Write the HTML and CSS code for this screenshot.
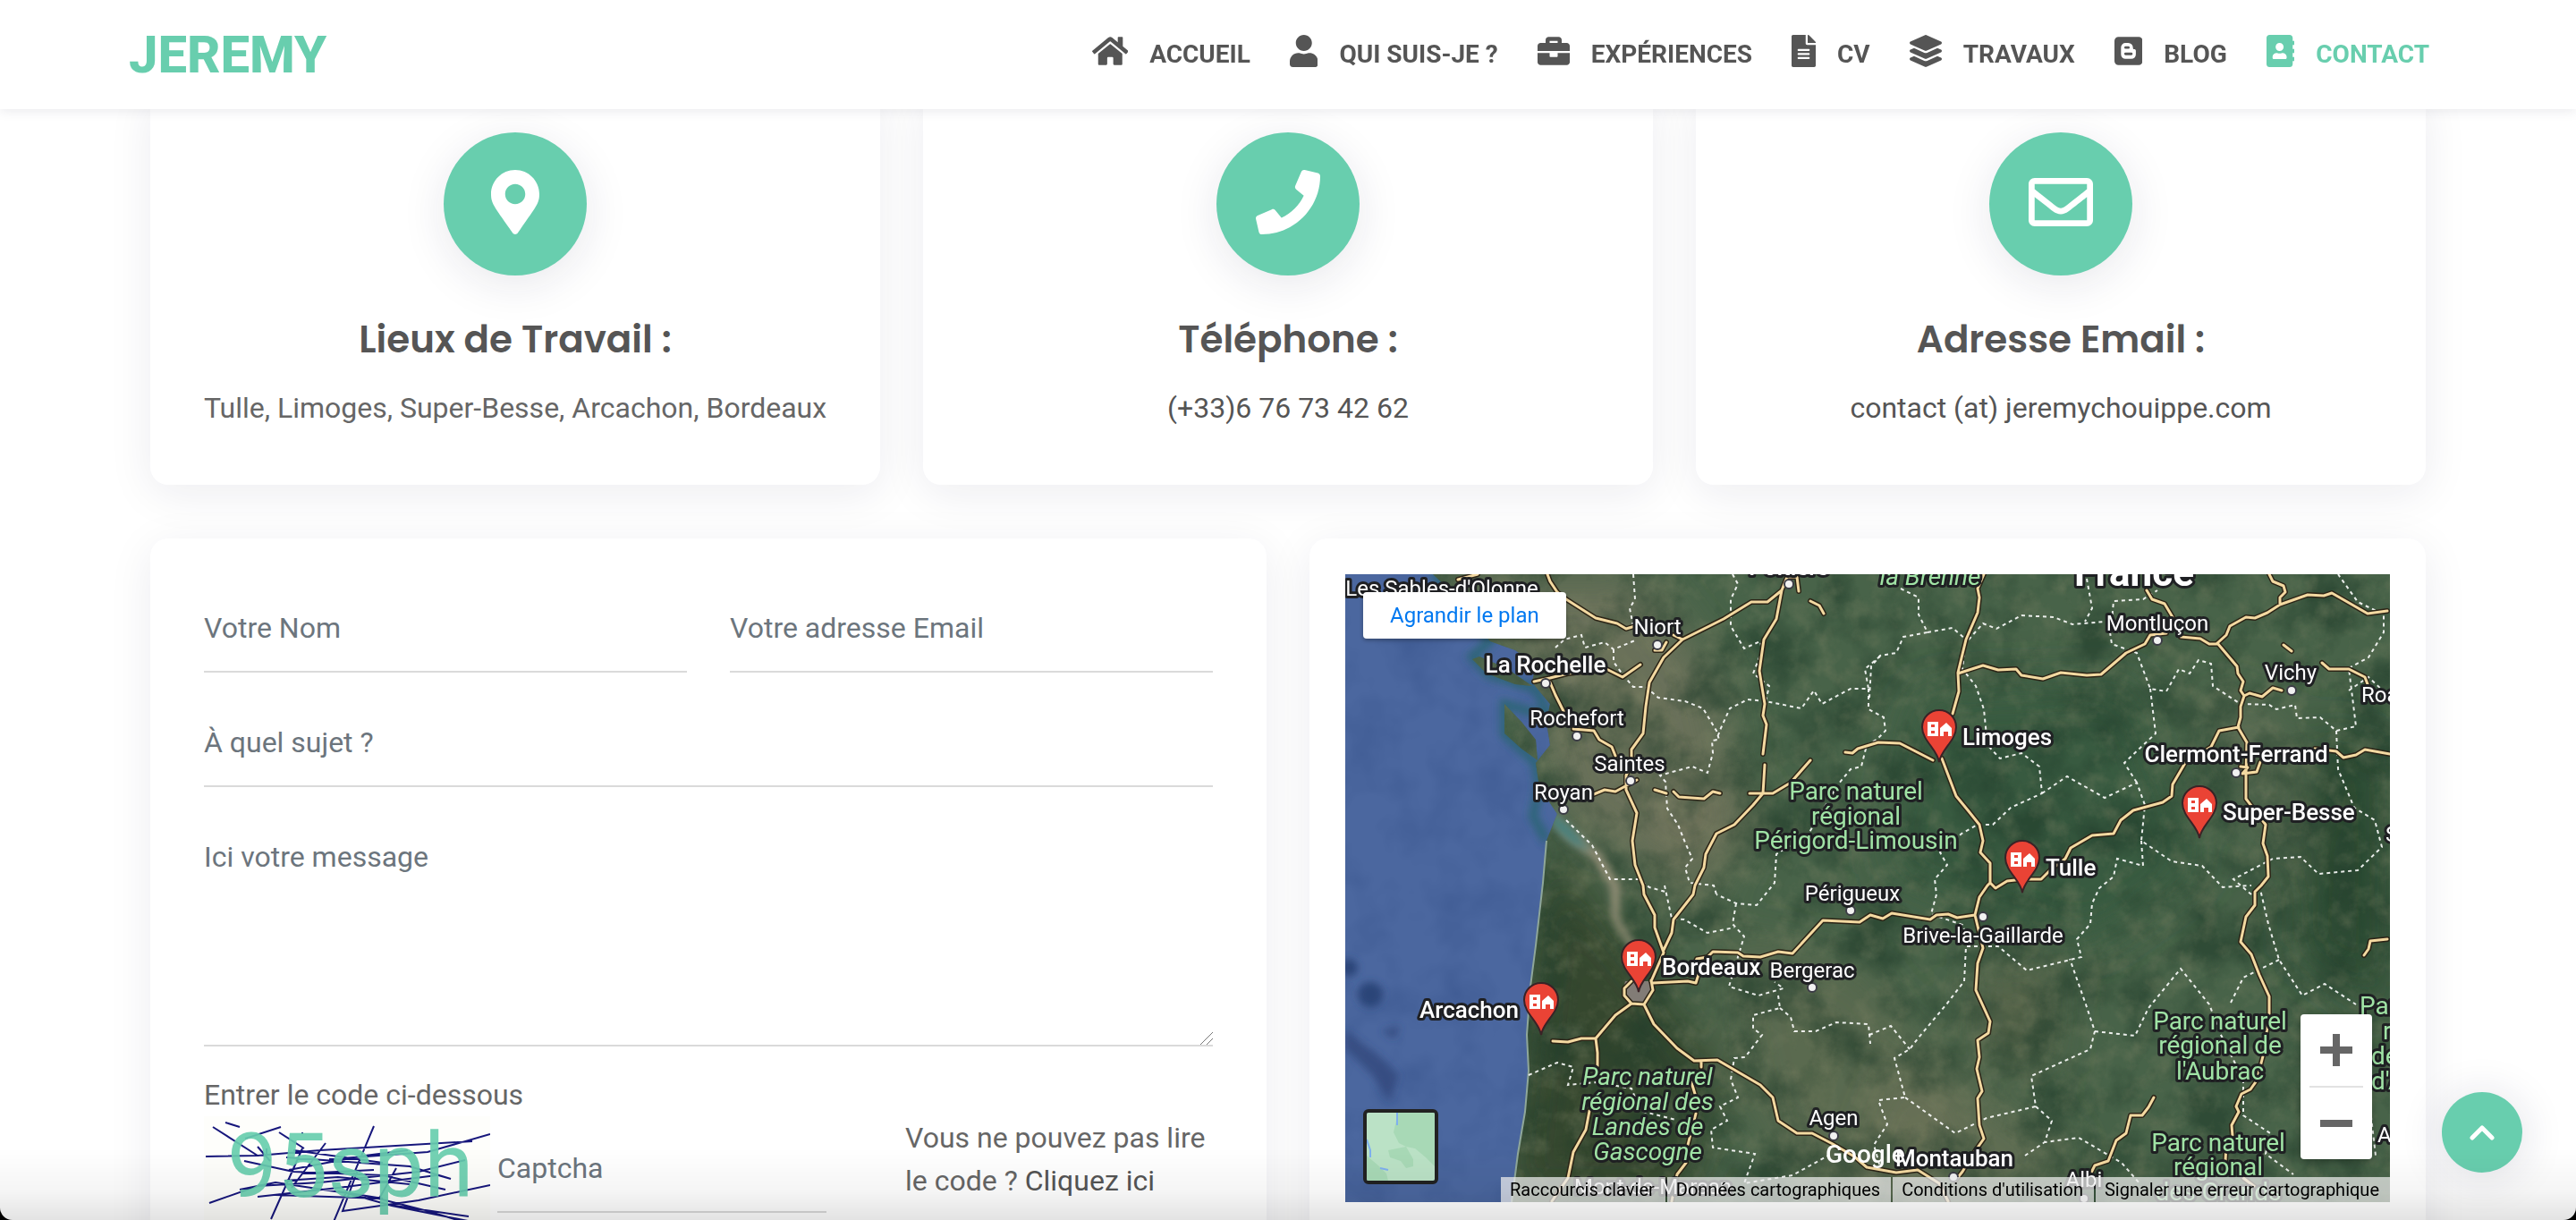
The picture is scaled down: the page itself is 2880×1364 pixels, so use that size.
FILE: index.html
```html
<!DOCTYPE html>
<html lang="fr">
<head>
<meta charset="utf-8">
<meta name="viewport" content="width=device-width, initial-scale=1">
<title>Jeremy - Contact</title>
<link rel="stylesheet" href="styles.css">
</head>
<body>
<header class="header">
  <a class="logo" href="#">JEREMY</a>
  <nav class="nav">
    <a href="#"><svg class="icon" viewBox="0 0 576 512"><path d="M280.37 148.26L96 300.11V464a16 16 0 0 0 16 16l112.06-.29a16 16 0 0 0 15.92-16V368a16 16 0 0 1 16-16h64a16 16 0 0 1 16 16v95.64a16 16 0 0 0 16 16.05L464 480a16 16 0 0 0 16-16V300L295.67 148.26a12.19 12.19 0 0 0-15.3 0zM571.6 251.47L488 182.56V44.05a12 12 0 0 0-12-12h-56a12 12 0 0 0-12 12v72.61L318.47 43a48 48 0 0 0-61 0L4.34 251.47a12 12 0 0 0-1.6 16.9l25.5 31A12 12 0 0 0 45.15 301l235.22-193.74a12.19 12.19 0 0 1 15.3 0L530.9 301a12 12 0 0 0 16.9-1.6l25.5-31a12 12 0 0 0-1.7-16.93z"/></svg>ACCUEIL</a>
    <a href="#"><svg class="icon" viewBox="0 0 448 512"><path d="M224 256c70.7 0 128-57.3 128-128S294.7 0 224 0 96 57.3 96 128s57.3 128 128 128zm89.600 32h-16.700c-22.200 10.200-46.900 16-72.900 16s-50.600-5.800-72.900-16h-16.700C60.200 288 0 348.200 0 422.400V464c0 26.500 21.500 48 48 48h352c26.500 0 48-21.500 48-48v-41.600c0-74.200-60.200-134.400-134.400-134.400z"/></svg>QUI SUIS-JE ?</a>
    <a href="#"><svg class="icon" viewBox="0 0 512 512"><path d="M320 336c0 8.840-7.160 16-16 16h-96c-8.840 0-16-7.160-16-16v-48H0v144c0 25.600 22.400 48 48 48h416c25.600 0 48-22.400 48-48V288H320v48zm144-208h-80V80c0-25.600-22.400-48-48-48H176c-25.600 0-48 22.400-48 48v48H48c-25.600 0-48 22.400-48 48v80h512v-80c0-25.600-22.400-48-48-48zm-144 0H192V96h128v32z"/></svg>EXPÉRIENCES</a>
    <a href="#"><svg class="icon" viewBox="0 0 384 512"><path d="M224 136V0H24C10.700 0 0 10.700 0 24v464c0 13.300 10.700 24 24 24h336c13.300 0 24-10.700 24-24V160H248c-13.200 0-24-10.800-24-24zm64 236c0 6.600-5.400 12-12 12H108c-6.600 0-12-5.400-12-12v-8c0-6.600 5.400-12 12-12h168c6.600 0 12 5.400 12 12v8zm0-64c0 6.600-5.400 12-12 12H108c-6.600 0-12-5.400-12-12v-8c0-6.600 5.400-12 12-12h168c6.600 0 12 5.400 12 12v8zm0-72v8c0 6.600-5.400 12-12 12H108c-6.600 0-12-5.400-12-12v-8c0-6.600 5.400-12 12-12h168c6.600 0 12 5.400 12 12zm96-114.100v6.100H256V0h6.100c6.400 0 12.500 2.500 17 7l97.900 98c4.500 4.500 7 10.600 7 16.900z"/></svg>CV</a>
    <a href="#"><svg class="icon" viewBox="0 0 512 512"><path d="M12.410 148.020l232.940 105.670c6.800 3.090 14.490 3.090 21.290 0l232.940-105.670c16.550-7.510 16.550-32.520 0-40.030L266.650 2.310a25.607 25.607 0 0 0-21.290 0L12.410 107.980c-16.550 7.510-16.550 32.530 0 40.040zm487.180 88.280l-58.090-26.330-161.640 73.270c-7.560 3.430-15.590 5.170-23.860 5.170s-16.290-1.740-23.860-5.170L70.510 209.970l-58.100 26.330c-16.550 7.500-16.550 32.500 0 40l232.940 105.590c6.800 3.080 14.490 3.080 21.290 0L499.590 276.300c16.550-7.500 16.550-32.500 0-40zm0 127.800l-57.870-26.230-161.860 73.370c-7.560 3.430-15.590 5.170-23.860 5.170s-16.290-1.740-23.860-5.170L70.290 337.870 12.410 364.100c-16.550 7.500-16.550 32.500 0 40l232.940 105.590c6.800 3.080 14.490 3.080 21.290 0L499.590 404.100c16.550-7.500 16.550-32.500 0-40z"/></svg>TRAVAUX</a>
    <a href="#"><svg class="icon" viewBox="0 0 448 512"><path fill-rule="evenodd" d="M64 32h320a64 64 0 0 1 64 64v320a64 64 0 0 1-64 64H64a64 64 0 0 1-64-64V96a64 64 0 0 1 64-64zm112 96a72 72 0 0 0-72 72v110a72 72 0 0 0 72 72h92a72 72 0 0 0 72-72v-56c0-18-12-26-26-26-14 0-20-8-20-26a74 74 0 0 0-74-74zm0 54h46a20 20 0 0 1 0 40h-46a20 20 0 0 1 0-40zm0 100h92a21 21 0 0 1 0 42h-92a21 21 0 0 1 0-42z"/></svg>BLOG</a>
    <a class="active" href="#"><svg class="icon" viewBox="0 0 448 512"><path d="M436 160c6.600 0 12-5.400 12-12v-40c0-6.600-5.400-12-12-12h-20V48c0-26.500-21.500-48-48-48H48C21.500 0 0 21.500 0 48v416c0 26.500 21.500 48 48 48h320c26.500 0 48-21.500 48-48v-48h20c6.600 0 12-5.400 12-12v-40c0-6.600-5.400-12-12-12h-20v-64h20c6.600 0 12-5.400 12-12v-40c0-6.600-5.400-12-12-12h-20v-64h20zm-228-32c35.300 0 64 28.700 64 64s-28.700 64-64 64-64-28.700-64-64 28.700-64 64-64zm112 236.800c0 10.600-10 19.200-22.400 19.200H118.400C106 384 96 375.400 96 364.800v-19.200c0-31.800 30.100-57.600 67.200-57.600h5c12.300 5.100 25.700 8 39.800 8s27.600-2.900 39.800-8h5c37.100 0 67.200 25.800 67.200 57.600v19.200z"/></svg>CONTACT</a>
  </nav>
</header>

<main class="page">
  <section class="infos">
    <article class="card info">
      <span class="badge"><svg viewBox="0 0 384 512"><path d="M172.268 501.670C26.970 291.031 0 269.413 0 192 0 85.961 85.961 0 192 0s192 85.961 192 192c0 77.413-26.970 99.031-172.268 309.670-9.535 13.774-29.930 13.773-39.464 0zM192 272c44.183 0 80-35.817 80-80s-35.817-80-80-80-80 35.817-80 80 35.817 80 80 80z"/></svg></span>
      <h2>Lieux de Travail :</h2>
      <p>Tulle, Limoges, Super-Besse, Arcachon, Bordeaux</p>
    </article>
    <article class="card info">
      <span class="badge"><svg viewBox="0 0 512 512"><path d="M493.400 24.600l-104-24c-11.300-2.600-22.900 3.300-27.500 13.900l-48 112c-4.200 9.800-1.400 21.300 6.900 28l60.600 49.600c-36 76.700-98.900 140.500-177.200 177.200l-49.600-60.600c-6.800-8.300-18.200-11.100-28-6.900l-112 48C3.900 366.500-2 378.100.600 389.400l24 104C27.100 504.200 36.700 512 48 512c256.100 0 464-207.500 464-464 0-11.200-7.700-20.900-18.600-23.400z"/></svg></span>
      <h2>Téléphone :</h2>
      <p><a href="#">(+33)6 76 73 42 62</a></p>
    </article>
    <article class="card info">
      <span class="badge"><svg viewBox="0 0 512 512"><path d="M464 64H48C21.490 64 0 85.490 0 112v288c0 26.510 21.490 48 48 48h416c26.510 0 48-21.490 48-48V112c0-26.510-21.490-48-48-48zm0 48v40.805c-22.422 18.259-58.168 46.651-134.587 106.490-16.841 13.247-50.201 45.072-73.413 44.701-23.208.375-56.579-31.459-73.413-44.701C106.180 199.465 70.425 171.067 48 152.805V112h416zM48 400V214.398c22.914 18.251 55.409 43.862 104.938 82.646 21.857 17.205 60.134 55.186 103.062 54.955 42.717.231 80.509-37.199 103.053-54.947 49.528-38.783 82.032-64.401 104.947-82.653V400H48z"/></svg></span>
      <h2>Adresse Email :</h2>
      <p><a href="#">contact (at) jeremychouippe.com</a></p>
    </article>
  </section>

  <section class="panels">
    <form class="card form">
      <div class="pair">
        <input type="text" placeholder="Votre Nom" aria-label="Votre Nom">
        <input type="email" placeholder="Votre adresse Email" aria-label="Votre adresse Email">
      </div>
      <input type="text" placeholder="À quel sujet ?" aria-label="À quel sujet ?">
      <textarea placeholder="Ici votre message" aria-label="Ici votre message"></textarea>
      <div class="code">
        <label for="captcha">Entrer le code ci-dessous</label>
        <div class="code-row">
          <svg class="captcha" viewBox="0 0 320 118" role="img" aria-label="Code">
            <g class="scribble">
              <path d="M10 12L60 44M24 7L40 12M46 25L86 12M84 18L112 36M110 18V20M2 45L60 44L130 38L300 28M320 20L250 40L140 48M45 50L100 62L200 66L270 82M6 97L60 78L130 74L240 62L292 49M75 115L110 36M190 11L145 118M136 30L98 80M92 46L230 56L276 70L262 66M95 60L180 44L228 38M60 90L150 80L260 66M40 82L80 74L160 86L210 100L300 118M320 77L240 94L155 106L172 60M200 98L296 112M195 92L250 106L290 118M215 58L196 92M80 88L200 92L150 84M60 34L74 50M100 38L200 52M70 36L70 42M90 72L150 68L230 76M110 64L190 60"/>
            </g>
            <text x="26" y="90">95sph</text>
          </svg>
          <input id="captcha" type="text" placeholder="Captcha">
          <p>Vous ne pouvez pas lire le code ? <a href="#">Cliquez ici</a></p>
        </div>
      </div>
    </form>

    <div class="card mapcard">
      <div class="map">
        <svg class="terrain" viewBox="0 0 1168 702" preserveAspectRatio="xMidYMid slice">
          <defs>
            <filter id="patches" x="0" y="0" width="100%" height="100%" color-interpolation-filters="sRGB"><feTurbulence type="fractalNoise" baseFrequency="0.016" numOctaves="6" seed="8"/><feColorMatrix values="0 0 0 0 0.13  0 0 0 0 0.24  0 0 0 0 0.17  2.6 0 0 0 -1.05"/></filter>
            <filter id="fields" x="0" y="0" width="100%" height="100%" color-interpolation-filters="sRGB"><feTurbulence type="fractalNoise" baseFrequency="0.04" numOctaves="5" seed="21"/><feColorMatrix values="0 0 0 0 0.5  0 0 0 0 0.52  0 0 0 0 0.40  0 2 0 0 -0.9"/></filter>
            <filter id="waves" x="0" y="0" width="100%" height="100%" color-interpolation-filters="sRGB"><feTurbulence type="fractalNoise" baseFrequency="0.02" numOctaves="3" seed="3"/><feColorMatrix values="0 0 0 0 0.22  0 0 0 0 0.33  0 0 0 0 0.55  0 0 1 0 -0.4"/></filter>
            <filter id="soft" x="-30%" y="-30%" width="160%" height="160%"><feGaussianBlur stdDeviation="26"/></filter>
            <filter id="shore" x="-30%" y="-30%" width="160%" height="160%"><feGaussianBlur stdDeviation="4"/></filter>
            <clipPath id="land"><path d="M98 0L130 30L150 61L162 75L190 85L213 101L209 121L229 145L225 165L229 191L213 211L217 238L237 268L225 298L221 345L213 415L207 461L203 515L205 555L201 601L193 648L186 702H1168V0ZM142 95L150 92L180 105L209 125L190 123L158 111ZM178 145L197 165L213 185L215 208L197 195L178 178Z"/></clipPath>
            <g id="pin"><path d="M0 0C-2-14-19-24-19-39A19 19 0 0 1 19-39C19-24 2-14 0 0Z" fill="#ea4335" stroke="#3a2226" stroke-width="2"/><path fill="#fff" fill-rule="evenodd" d="M-13-45H-1V-29H-13ZM-9-42V-39H-5V-42ZM-9-35V-32H-5V-35ZM1-38L8-44L14-38V-29H10V-34H5V-29H1Z"/></g>
            <path id="roads" d="M226 0L229 8L237 20L247 28L280 49L304 55L314 61L324 58M494 3L488 18L472 31H454L423 50L377 73L356 93L340 121L336 148L333 178L320 196L320 212L314 225V241L326 267L321 298L324 325L333 348L334 358L346 381V395L356 423L342 455M211 120L229 116L249 111L292 106L310 115L330 101M229 121L235 135L244 153M255 173L278 175L284 185L298 193L302 203M278 246L290 241L302 243L326 230M346 241L359 245M367 243L373 249L401 251L411 243L419 245M488 18L482 50L468 73L463 108L469 145L467 158L471 168L467 201M469 213L467 245L456 258L435 280L415 290L403 313L401 328L391 348L389 358L367 386L365 401L356 420M452 245L478 245L498 233L520 208M494 3L505 3L507 19M520 30L530 35L535 44M559 199L567 200L573 195L596 188L620 189L657 208M126 6L148 0M377 73L367 68M346 85H354L359 76M714 0L707 16L709 26L707 43L694 73L685 110L686 131L679 156M667 206L683 248L697 265L709 280L713 298L710 311L721 323V345L727 351L740 343L758 341L778 341L788 331L805 318L811 306L835 292L859 290L867 275L881 264L914 255L924 248L925 235L939 211L968 193L977 175L999 171M685 111L713 102L730 107L750 106L756 113L780 117L800 110L829 113L845 112L873 88L894 78L900 68L918 66M934 70L956 72L966 78H975M896 18L902 28L916 33L925 48M1033 0L1037 8L1049 13L1051 20L1045 26V34M975 77L985 68L989 58L1007 48L1017 49L1031 43L1045 34L1076 23L1094 24L1103 21L1143 44L1165 41M975 77L997 103L998 111L1004 120L1001 130L1005 136L1001 148V160L998 171L1008 188L1007 225V251L1029 280L1026 301L1031 315L1032 338L1024 348L1017 355V370L1007 383L1001 411L1013 425L1022 448L1033 472V491L1027 535L1019 566L1012 576L1002 581L996 595L999 601L991 616L992 628L985 638L984 656M1004 675L1017 685M1005 136L1011 133L1025 137L1037 127L1047 130M1092 99L1100 106H1122L1140 115L1143 123M1049 79L1058 86M1084 195L1108 198L1116 205L1130 202L1140 196L1168 201M1001 215L1009 216L1003 223L1019 221L1023 210M320 455L312 463V471L320 480L334 481L344 465L342 454M344 457L383 455L392 457L396 444M385 448L393 430L405 428L411 422L439 423L445 427L464 428L484 422L500 424L534 387L575 389L587 381L601 385L611 379L654 386L661 381L674 380L684 384L704 381L709 361L718 348L721 345M320 480L302 493L280 519L282 535V550M232 522L249 523L264 519H280M273 600L269 621L255 646L249 675L231 701M334 481L345 503L371 530L390 544L416 543L464 571L478 585L484 611L505 625H522L545 637L569 651L583 663L616 669L640 666L664 681L674 701M398 545V551M387 568L391 581M392 603L383 638M381 658L371 671L365 701M704 381L713 418L707 435L705 465L721 500L719 513L707 521L709 540L706 553L712 578L707 586L709 616L714 631L702 648L690 668L682 678M904 585L898 596L891 605H878L873 625L862 633L853 656L838 661L833 671M1165 408L1146 410L1144 419L1139 426"/>
          </defs>
          <rect width="1168" height="702" fill="#4b679f"/>
          <rect width="260" height="702" filter="url(#waves)"/>
          <g fill="#2c4478" filter="url(#shore)"><circle cx="28" cy="470" r="14"/><circle cx="4" cy="440" r="10"/><path d="M0 510L40 540L60 560L50 590L30 560L0 530ZM40 510L62 505L55 520Z" opacity=".7"/></g>
          <path d="M98 0L130 30L162 75L142 92L160 112L213 128L229 160L178 145L178 178L213 211L217 238L210 270L225 298" fill="none" stroke="#2d6578" stroke-width="10" filter="url(#shore)"/>
          <g clip-path="url(#land)">
            <rect width="1168" height="702" fill="#486349"/>
            <g filter="url(#soft)">
              <path d="M100 0L330 0L420 120L440 300L330 330L240 270L190 80Z" fill="#767560" opacity=".75"/>
              <path d="M380 200L470 260L380 400L340 330Z" fill="#73735c" opacity=".6"/>
              <path d="M225 300L330 430L420 560L380 702H180Z" fill="#34472f"/>
              <path d="M640 130L880 120L960 330L830 420L600 330Z" fill="#385a40"/>
              <path d="M420 400L580 440L700 600L640 700L500 690L440 560Z" fill="#6c7256" opacity=".5"/>
              <path d="M960 130L1040 160L1060 340L1010 260Z" fill="#6d735c" opacity=".65"/>
              <path d="M1090 160L1168 200V500L1060 420Z" fill="#2a4933"/>
              <path d="M620 540L820 640L760 702H560Z" fill="#77775d" opacity=".5"/>
              <path d="M700 440L800 430L790 560L700 540Z" fill="#60664d" opacity=".6"/>
            </g>
            <rect width="1168" height="702" filter="url(#patches)" opacity=".6"/>
            <rect width="1168" height="702" filter="url(#fields)" opacity=".4"/>
            <path d="M230 262L250 285L285 310L308 350L306 385L330 424L318 418L298 385L296 350L276 318L240 290Z" fill="#8f8c74" filter="url(#shore)"/>
            <path d="M225 262L250 280L275 310L255 302L235 285Z" fill="#49807c" filter="url(#shore)"/>
            <path d="M313 455L342 455L344 470L334 482L320 480L310 468Z" fill="#827c76"/>
          </g>
          <path class="coast" d="M225 298L221 345L213 415L207 461L203 515L205 555L201 601L193 648L186 702"/>
          <path class="border" d="M322 0L324 28L318 38L322 58M235 82L245 73L264 68L268 82L290 76L300 84L324 74M300 84V98L310 112L322 126L336 126L350 138L380 142L400 150L415 175L418 185L410 186L411 200L405 222L388 215L362 222L352 225L358 232L360 262L372 280L380 300L388 318L380 328L385 345L412 348L415 358M433 0L439 11L431 28V58L446 83L464 75L466 85L456 111L474 125L470 142L510 150L524 130L533 145L565 128L585 128L581 106L600 90M470 142L450 140L430 150L420 172L415 185M585 128V151L602 160L604 175L594 185L583 191L577 215L565 218L551 235L518 290L482 313L480 345L460 370L437 368L415 358M437 368L433 391L446 405L435 441L429 461L462 471L490 463L480 456M357 348L365 385L379 386L405 401L435 395M484 471L486 485L456 493V508L466 515L447 540L435 541L431 565L439 585L419 595L427 611L409 621L411 641L458 648L446 681L500 672L540 650M486 485L498 495L502 511H526L549 501L585 503L587 525M205 560L237 546L255 551L249 571L280 568L320 575L330 600L370 610M247 275L276 303L296 341H328L340 350L358 355"/>
          <path class="border" d="M621 16L641 26V45L651 65L624 70L616 88L598 91L588 103L586 138M651 65L679 60L694 73L690 106L705 125L714 151L718 191L732 206L756 200L776 215L779 245L744 261L724 280H707L689 290L665 311L673 325L659 341L661 358L655 380L690 392L700 416M779 245L807 226L849 250L885 233L894 258L890 298L924 321L958 326L981 350L1013 348M697 73L713 55L728 61L756 46L792 48L813 56L849 53M829 5L835 38L827 53M857 53L859 30L892 28L908 18M855 65L857 78L885 88L900 128L918 131L932 106L944 111L954 96L968 100L970 125L1001 145L1033 146L1041 151L1062 146L1064 161L1090 160L1108 175L1130 170L1122 105L1144 93L1161 65V45L1132 31L1110 0M900 128L906 178L871 211L885 233M1108 175L1110 218L1128 261L1151 275L1159 305L1132 331L1088 335L1068 316L1037 318L993 341L1013 358M890 298L892 326L863 318L859 338L843 351L835 368L833 391L818 408L823 428L762 443L730 416H694L692 455L672 481L641 518L631 531L614 541L626 585L596 588L606 615L591 638L600 670M586 515L610 505L631 531M626 585L682 625L717 608L772 595L767 561L833 531L838 511L828 481L810 430M838 511L883 516L898 485L934 441L966 481L979 515L1004 565V605L1034 625L1029 648L1060 671M772 595L790 611L782 635L820 630L868 658L888 681M760 650L782 635M1022 348L1032 391L1044 431L1070 471L1095 458L1130 481M1044 431L1004 451L989 481M1145 590L1152 650M1122 130L1144 115L1160 130"/>
          <use class="road-edge" href="#roads"/>
          <use class="road" href="#roads"/>
          <g class="dots">
            <circle cx="349" cy="79" r="5"/><circle cx="224" cy="122" r="5"/><circle cx="259" cy="181" r="5"/><circle cx="319" cy="231" r="5"/><circle cx="244" cy="263" r="5"/><circle cx="496" cy="11" r="5"/><circle cx="908" cy="74" r="5"/><circle cx="1058" cy="130" r="5"/><circle cx="996" cy="222" r="5"/><circle cx="565" cy="376" r="5"/><circle cx="522" cy="462" r="5"/><circle cx="546" cy="628" r="5"/><circle cx="713" cy="383" r="5"/><circle cx="680" cy="674" r="5"/><circle cx="826" cy="698" r="5"/>
          </g>
          <g class="place mid">
            <text x="349" y="67">Niort</text><text x="259" y="169">Rochefort</text><text x="318" y="220">Saintes</text><text x="244" y="252">Royan</text><text x="908" y="63">Montluçon</text><text x="1057" y="118">Vichy</text><text x="567" y="365">Périgueux</text><text x="522" y="451">Bergerac</text><text x="546" y="616">Agen</text><text x="713" y="412">Brive-la-Gaillarde</text><text x="826" y="685">Albi</text><text x="344" y="693">Mont-de-Marsan</text><text x="108" y="24">Les Sables-d'Olonne</text>
          </g>
          <g class="place"><text x="1136" y="143">Roanne</text><text x="1163" y="299">Saint</text><text x="1154" y="635">Alès</text></g>
          <g class="place major mid">
            <text x="224" y="110">La Rochelle</text><text x="996" y="210">Clermont-Ferrand</text><text x="681" y="662">Montauban</text><text x="496" y="1">Poitiers</text>
          </g>
          <text class="place country mid" x="882" y="13">France</text>
          <g class="place park mid">
            <text x="571" y="252">Parc naturel</text><text x="571" y="280">régional</text><text x="571" y="307">Périgord-Limousin</text>
            <text x="978" y="509">Parc naturel</text><text x="978" y="536">régional de</text><text x="978" y="565">l'Aubrac</text>
            <text x="976" y="645">Parc naturel</text><text x="976" y="672">régional</text><text x="976" y="700">des Grands</text>
          </g>
          <g class="place park italic mid">
            <text x="338" y="571">Parc naturel</text><text x="338" y="599">régional des</text><text x="338" y="627">Landes de</text><text x="338" y="655">Gascogne</text><text x="654" y="12">la Brenne</text>
          </g>
          <g class="place park"><text x="1134" y="492">Parc</text><text x="1160" y="520">rég</text><text x="1147" y="548">des</text><text x="1147" y="576">d'Ar</text></g>
          <g class="place major">
            <text x="690" y="191">Limoges</text><text x="981" y="275">Super-Besse</text><text x="783" y="337">Tulle</text><text x="354" y="448">Bordeaux</text><text x="83" y="496">Arcachon</text>
          </g>
          <use href="#pin" x="664" y="210"/><use href="#pin" x="955" y="295"/><use href="#pin" x="757" y="356"/><use href="#pin" x="328" y="467"/><use href="#pin" x="219" y="515"/>
          <text class="google" x="537" y="658">Google</text>
        </svg>
        <a class="enlarge" href="#">Agrandir le plan</a>
        <button class="layers" type="button" aria-label="Plan"><svg viewBox="0 0 76 76"><path fill="#bbe2c6" d="M0 0H76V76H0z"/><path fill="#a8d9b6" d="M35 0H76V60L66 50L54 40L44 38L36 34L30 22ZM24 42L44 38L52 52V60L44 62L38 54L26 50ZM0 48L14 60L22 68L24 76H0Z"/><path fill="none" stroke="#7fb0ef" stroke-width="2" d="M0 30L4 42V50M15 62L24 64M34 0V14"/></svg></button>
        <div class="zoom">
          <button type="button" aria-label="Zoom avant"><svg viewBox="0 0 36 36"><path d="M14 0h8v14h14v8H22v14h-8V22H0v-8h14z"/></svg></button>
          <button type="button" aria-label="Zoom arrière"><svg viewBox="0 0 36 36"><path d="M0 14h36v8H0z"/></svg></button>
        </div>
        <div class="legal">
          <button type="button">Raccourcis clavier</button><button type="button">Données cartographiques</button><a href="#">Conditions d'utilisation</a><a href="#">Signaler une erreur cartographique</a>
        </div>
      </div>
    </div>
  </section>
</main>

<a class="to-top" href="#" aria-label="Haut de page"><svg viewBox="0 0 28 18"><path d="M3 15L14 4L25 15"/></svg></a>
<div class="edge"></div>
</body>
</html>
```
FILE: styles.css
```css
* { box-sizing: border-box; }
html { height: 100%; overflow: hidden; }
body {
  margin: 0;
  height: 100vh;
  overflow: hidden;
  background: #fff;
  color: #666;
  font: 32px/48px Roboto, "Liberation Sans", sans-serif;
}
a { color: #555; text-decoration: none; }
button { border: 0; padding: 0; margin: 0; font: inherit; background: none; cursor: pointer; }

.header {
  position: fixed;
  inset: 0 0 auto;
  z-index: 10;
  display: flex;
  align-items: center;
  justify-content: space-between;
  height: 122px;
  padding: 0 164px 0 144px;
  background: #fff;
  box-shadow: 0 2px 12px rgba(40, 40, 70, .1);
}
.header .logo { color: #68ceae; font-size: 58px; font-weight: 800; }
.nav { display: flex; gap: 44px; }
.nav a {
  display: flex;
  align-items: center;
  gap: 24px;
  font-size: 28px;
  font-weight: 700;
}
.nav .active { color: #68ceae; }
.icon { height: 36px; margin-bottom: 8px; fill: currentColor; }

.page { padding: 100px 168px 48px; }
.card {
  min-width: 0;
  border-radius: 20px;
  background: #fff;
  box-shadow: 0 10px 50px rgba(30, 30, 70, .08);
}
.infos { display: grid; grid-template-columns: repeat(3, 1fr); gap: 48px; }
.info {
  display: flex;
  flex-direction: column;
  align-items: center;
  padding: 48px 24px 62px;
  text-align: center;
}
.badge {
  display: flex;
  justify-content: center;
  width: 160px;
  height: 160px;
  padding-top: 42px;
  border-radius: 50%;
  background: #68ceae;
  box-shadow: 0 10px 50px rgba(30, 30, 70, .1);
}
.badge svg { height: 72px; fill: #fff; }
.info h2 {
  margin: 42px 0 22px;
  color: #555;
  font: 600 42px/60px Poppins, Inter, sans-serif;
}
.info p { margin: 0; }

.panels { display: grid; grid-template-columns: 1fr 1fr; gap: 48px; margin-top: 60px; }
.form { display: flex; flex-direction: column; gap: 30px; padding: 52px 60px; }
.pair { display: grid; grid-template-columns: 1fr 1fr; gap: 48px; }
input, textarea {
  display: block;
  width: 100%;
  min-width: 0;
  height: 98px;
  margin: 0;
  padding: 24px 0;
  border: 0;
  border-bottom: 2px solid #dadada;
  border-radius: 0;
  background: none;
  color: #666;
  font: inherit;
}
textarea { height: 260px; resize: vertical; }
textarea::-webkit-scrollbar { width: 20px; }
textarea::-webkit-resizer {
  background: linear-gradient(135deg, transparent 52%, #777 52% 56%, transparent 56% 74%, #777 74% 78%, transparent 78%);
}
::placeholder { color: #6c757d; opacity: 1; }
.code label { display: block; }
.code-row { display: flex; align-items: center; gap: 8px; }
.code-row input { flex: 0 1 368px; }
.code-row p { align-self: flex-start; width: 344px; margin: 0 0 0 auto; }
.captcha { flex: none; width: 320px; height: 118px; background: #fefefb; }
.captcha text { font: 100px Roboto, sans-serif; fill: #68ceae; fill-opacity: .92; }
.scribble { fill: none; stroke: #17177c; stroke-width: 2; }

.mapcard { padding: 40px; }
.map { position: relative; aspect-ratio: 1168 / 702; overflow: hidden; }
.terrain { display: block; width: 100%; height: 100%; }
.coast { fill: none; stroke: #8fa79a; stroke-width: 2; }
.border { fill: none; stroke: #fff; stroke-width: 2; stroke-dasharray: 4 4; opacity: .9; }
.road-edge { fill: none; stroke: #2c2416; stroke-width: 6; stroke-linejoin: round; stroke-linecap: round; }
.road { fill: none; stroke: #f3d9a1; stroke-width: 3; stroke-linejoin: round; stroke-linecap: round; }
.dots circle { fill: #f1f1f1; stroke: #3c3c46; stroke-width: 2; }
.place {
  fill: #fff;
  stroke: #1f2023;
  stroke-width: 6px;
  stroke-linejoin: round;
  paint-order: stroke;
  font-size: 24px;
}
.mid { text-anchor: middle; }
.major { font-size: 26px; font-weight: 500; }
.park { font-size: 28px; fill: #a0e3a5; }
.italic { font-style: italic; }
.country { font-size: 44px; font-weight: 700; }
.google { font: 500 28px Roboto, sans-serif; fill: #fff; }

.enlarge {
  position: absolute;
  top: 20px;
  left: 20px;
  padding: 0 30px;
  border-radius: 4px;
  background: #fff;
  color: #0078f0;
  font-size: 24px;
  line-height: 52px;
  box-shadow: 0 2px 4px rgba(0, 0, 0, .3);
}
.layers {
  position: absolute;
  left: 20px;
  bottom: 20px;
  width: 84px;
  height: 84px;
  border: 4px solid #222;
  border-radius: 6px;
  overflow: hidden;
}
.layers svg { display: block; }
.zoom {
  position: absolute;
  right: 20px;
  bottom: 48px;
  display: flex;
  flex-direction: column;
  width: 80px;
  padding: 0 10px;
  border-radius: 4px;
  background: #fff;
  box-shadow: 0 2px 8px rgba(0, 0, 0, .3);
}
.zoom button { display: grid; place-items: center; height: 80px; }
.zoom button + button { height: 82px; border-top: 2px solid #e2e2e2; }
.zoom svg { width: 36px; fill: #666; }
.legal {
  position: absolute;
  right: 0;
  bottom: 0;
  display: flex;
  gap: 2px;
  font-size: 20px;
  line-height: 28px;
}
.legal > * { padding: 0 12px 0 10px; background: rgba(245, 245, 245, .72); color: #000; white-space: nowrap; }

.to-top {
  position: fixed;
  right: 60px;
  bottom: 53px;
  display: grid;
  place-items: center;
  width: 90px;
  height: 90px;
  border-radius: 50%;
  background: #68ceae;
  box-shadow: 0 4px 50px rgba(30, 30, 70, .14);
}
.to-top svg { width: 28px; fill: none; stroke: #fff; stroke-width: 5; stroke-linecap: round; stroke-linejoin: round; }
.edge {
  position: fixed;
  inset: auto 0 0;
  z-index: 20;
  height: 80px;
  border-radius: 0 0 14px 14px;
  background: linear-gradient(transparent, rgba(0, 0, 0, .04) 60%, rgba(0, 0, 0, .11));
  box-shadow: 0 14px 0 #000;
  pointer-events: none;
}
```
